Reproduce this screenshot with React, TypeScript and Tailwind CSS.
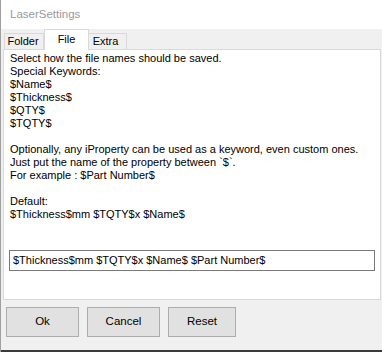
export default function App() {
  const lines = [
    'Select how the file names should be saved.',
    'Special Keywords:',
    '$Name$',
    '$Thickness$',
    '$QTY$',
    '$TQTY$',
    '',
    'Optionally, any iProperty can be used as a keyword, even custom ones.',
    'Just put the name of the property between `$`.',
    'For example : $Part Number$',
    '',
    'Default:',
    '$Thickness$mm $TQTY$x $Name$',
  ]

  return (
    <div className="flex h-[352px] w-[382px] flex-col overflow-hidden border-l border-[#a0a0a0] bg-[#f0f0f0] font-['Liberation_Sans',Arial,sans-serif] text-[11px] text-black">
      <div className="flex h-[29px] shrink-0 items-center bg-white pl-[9px] text-[11.5px] text-[#999999]">
        LaserSettings
      </div>

      <div className="flex h-[20px] items-end pl-[3px]">
        <div className="flex h-[16px] w-[40px] items-center justify-center border border-b-0 border-[#d9d9d9] bg-[#f0f0f0] pr-[2px]">Folder</div>
        <div className="relative z-10 -mb-px flex h-[21px] w-[45px] items-start justify-center border border-b-0 border-[#d9d9d9] bg-white pt-[1px]">File</div>
        <div className="flex h-[16px] w-[38px] items-center justify-center border border-b-0 border-l-0 border-[#d9d9d9] bg-[#f0f0f0] pr-[4px]">Extra</div>
      </div>

      <div className="ml-[2px] mr-[1px] flex h-[251px] flex-col border border-[#d9d9d9] bg-white">
        <div className="pl-[6px] pt-[2px] leading-[13px]">
          {lines.map((line, i) => (
            <div key={i} className="h-[13px] whitespace-nowrap">{line}</div>
          ))}
        </div>
        <div className="mx-[5px] mt-[29px] flex h-[21px] items-center border border-[#7a7a7a] pl-[3px]">
          $Thickness$mm $TQTY$x $Name$ $Part Number$
        </div>
      </div>

      <div className="flex gap-[8px] pl-[5px] pt-[7px]">
        <button className="h-[30px] w-[73px] border border-[#adadad] bg-[#e1e1e1] text-[11.5px]">Ok</button>
        <button className="h-[30px] w-[73px] border border-[#adadad] bg-[#e1e1e1] text-[11.5px]">Cancel</button>
        <button className="h-[30px] w-[68px] border border-[#adadad] bg-[#e1e1e1] text-[11.5px]">Reset</button>
      </div>

      <div className="mt-auto h-[2px] bg-[#3a3a3a]" />
    </div>
  )
}
